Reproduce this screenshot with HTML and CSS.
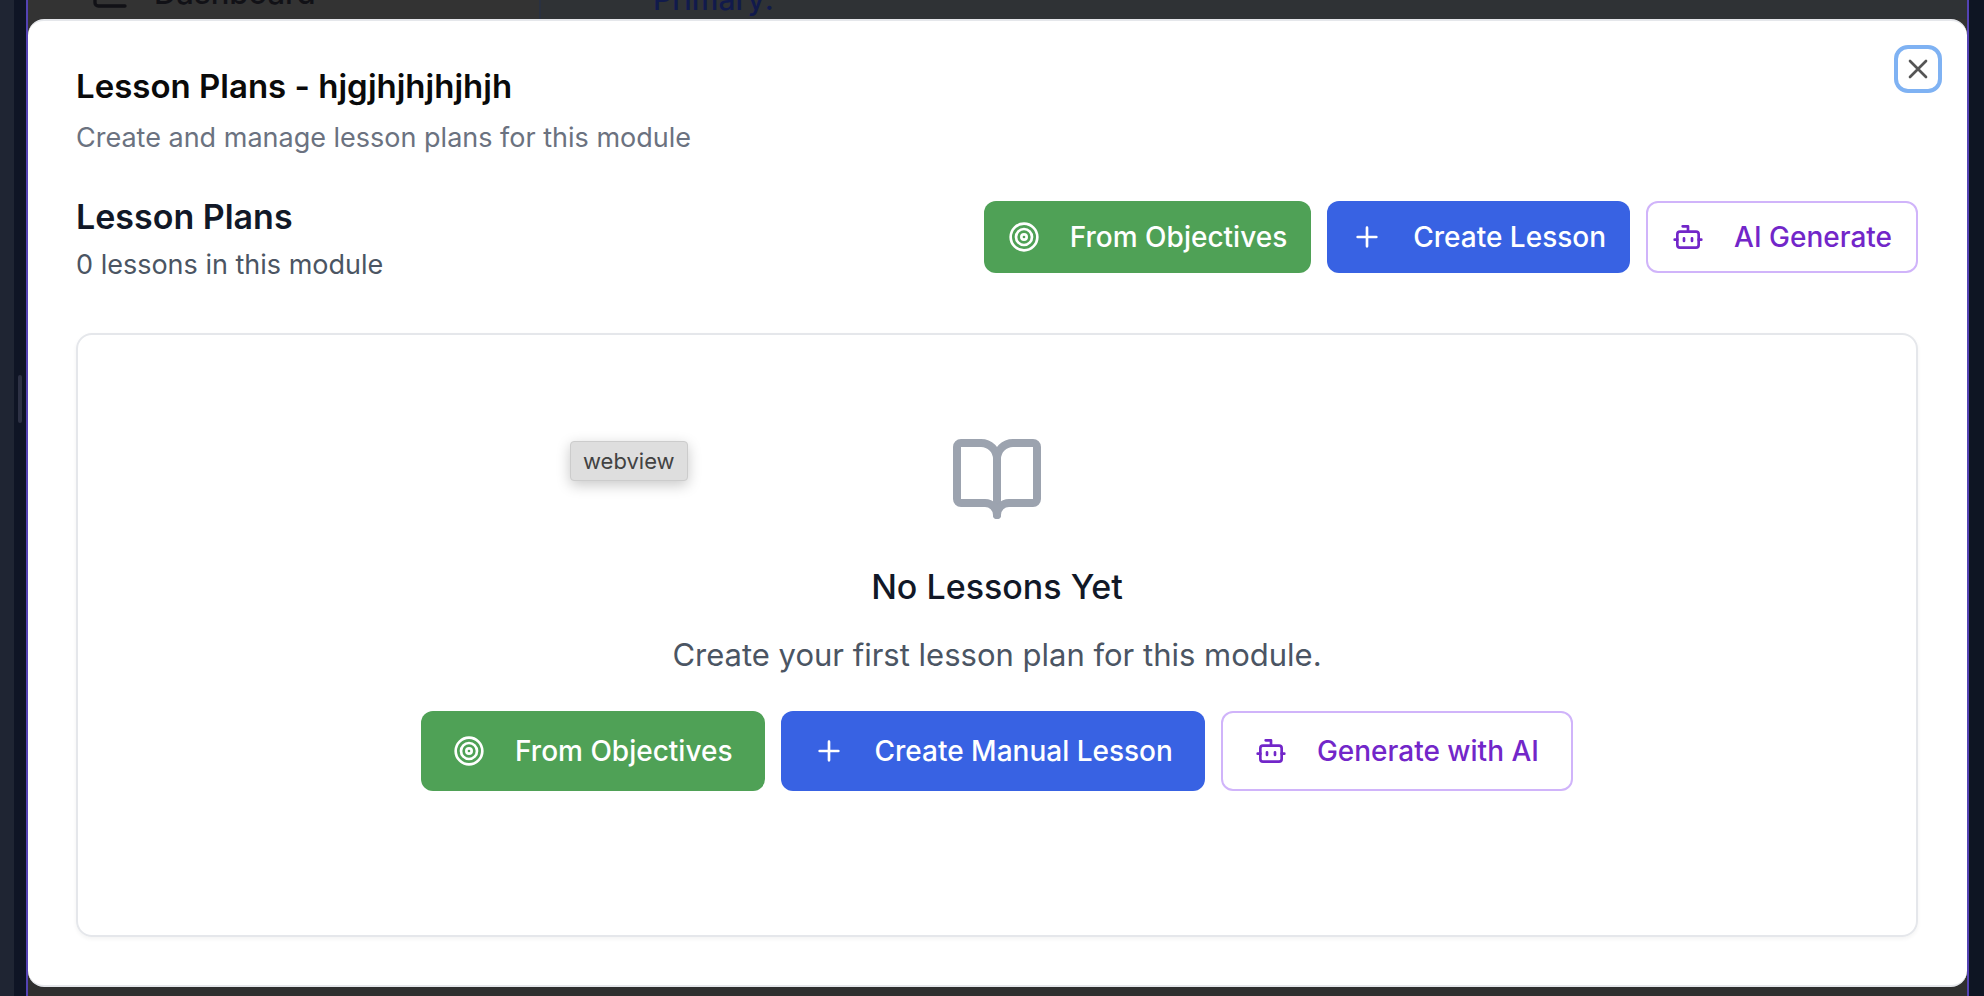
FILE: index.html
```html
<!DOCTYPE html>
<html lang="en">
<head>
<meta charset="utf-8">
<title>Lesson Plans</title>
<link rel="stylesheet" href="styles.css">
</head>
<body>
<svg class="sprite" aria-hidden="true">
  <symbol id="target" viewBox="0 0 24 24"><circle cx="12" cy="12" r="10"/><circle cx="12" cy="12" r="6"/><circle cx="12" cy="12" r="2"/></symbol>
  <symbol id="plus" viewBox="0 0 24 24"><path d="M5 12h14M12 5v14"/></symbol>
  <symbol id="bot" viewBox="0 0 24 24"><path d="M12 8V4H8"/><rect width="16" height="12" x="4" y="8" rx="2"/><path d="M2 14h2M20 14h2M15 13v2M9 13v2"/></symbol>
  <symbol id="book" viewBox="0 0 24 24"><path d="M12 7v14"/><path d="M3 18a1 1 0 0 1-1-1V4a1 1 0 0 1 1-1h5a4 4 0 0 1 4 4 4 4 0 0 1 4-4h5a1 1 0 0 1 1 1v13a1 1 0 0 1-1 1h-6a3 3 0 0 0-3 3 3 3 0 0 0-3-3z"/></symbol>
  <symbol id="close" viewBox="0 0 24 24"><path d="M18 6 6 18M6 6l12 12"/></symbol>
  <symbol id="chart" viewBox="0 0 24 24"><path d="M3 3v16a2 2 0 0 0 2 2h16"/></symbol>
</svg>
<div class="shell">
  <div class="rail"></div>
  <div class="gutter"><span class="grip"></span></div>
  <div class="frame">
    <div class="backdrop">
      <div class="nav-item"><svg class="icon"><use href="#chart"/></svg><span>Dashboard</span></div>
      <div class="notice">Primary:</div>
    </div>
    <main class="dialog" role="dialog" aria-labelledby="title">
      <button class="close" aria-label="Close"><svg class="icon"><use href="#close"/></svg></button>
      <header class="intro">
        <h1 class="title" id="title">Lesson Plans - hjgjhjhjhjhjh</h1>
        <p class="subtitle">Create and manage lesson plans for this module</p>
      </header>
      <section class="toolbar">
        <div>
          <h2 class="heading">Lesson Plans</h2>
          <p class="count">0 lessons in this module</p>
        </div>
        <div class="actions">
          <button class="btn green"><svg class="icon"><use href="#target"/></svg>From Objectives</button>
          <button class="btn blue"><svg class="icon"><use href="#plus"/></svg>Create Lesson</button>
          <button class="btn outline"><svg class="icon"><use href="#bot"/></svg>AI Generate</button>
        </div>
      </section>
      <section class="card">
        <svg class="icon book"><use href="#book"/></svg>
        <h3 class="empty-title">No Lessons Yet</h3>
        <p class="empty-text">Create your first lesson plan for this module.</p>
        <div class="actions large">
          <button class="btn green"><svg class="icon"><use href="#target"/></svg>From Objectives</button>
          <button class="btn blue"><svg class="icon"><use href="#plus"/></svg>Create Manual Lesson</button>
          <button class="btn outline"><svg class="icon"><use href="#bot"/></svg>Generate with AI</button>
        </div>
      </section>
    </main>
  </div>
  <div class="edge"></div>
</div>
<div class="tooltip" role="tooltip">webview</div>
</body>
</html>
```
FILE: styles.css
```css
* { box-sizing: border-box; }
body, h1, h2, h3, p { margin: 0; }
body {
  font-family: Inter, "Liberation Sans", sans-serif;
  background: #0f1525;
}
button { font: inherit; cursor: pointer; }
.sprite { display: none; }
.icon {
  width: 32px;
  height: 32px;
  flex: none;
  fill: none;
  stroke: currentColor;
  stroke-width: 2;
  stroke-linecap: round;
  stroke-linejoin: round;
}
.shell { display: flex; min-height: 100vh; }
.rail { width: 14px; background: #1f2533; }
.gutter { width: 12px; display: flex; justify-content: flex-end; align-items: flex-start; padding: 375px 4px 0 0; }
.grip { width: 4px; height: 48px; border-radius: 2px; background: #2d3144; }
.edge { width: 15px; background: #0e1523; }
.frame {
  flex: 1;
  min-width: 0;
  display: flex;
  flex-direction: column;
  padding-bottom: 9px;
  border: solid #5443b4;
  border-width: 0 2px;
  background: #2f2f2f;
}
.backdrop {
  display: flex;
  height: 32px;
  margin-bottom: -13px;
  overflow: hidden;
  background: #333333;
  color: #111116;
  font-size: 31px;
  font-weight: 500;
}
.nav-item { display: flex; align-items: flex-end; gap: 24px; width: 511px; height: 11px; padding-left: 62px; }
.nav-item .icon { width: 40px; height: 40px; }
.nav-item span { line-height: 36px; }
.notice {
  flex: 1;
  display: flex;
  align-items: flex-end;
  height: 19px;
  padding-left: 112px;
  border-left: 2px solid #2a3140;
  background: #2f3235;
  color: #111a4c;
  font-size: 30px;
  line-height: 40px;
}
.dialog {
  position: relative;
  flex: 1;
  display: flex;
  flex-direction: column;
  padding: 45px 49px 48px 48px;
  border: 2px solid #e5e7eb;
  border-width: 2px 0;
  border-radius: 16px;
  background: #ffffff;
}
.close {
  position: absolute;
  top: 24px;
  right: 25px;
  display: grid;
  place-items: center;
  width: 48px;
  height: 48px;
  padding: 0;
  border: 4px solid #7fb2f3;
  border-radius: 14px;
  background: #ffffff;
  color: #555555;
}
.title { color: #0a0a0a; font-size: 33px; font-weight: 600; line-height: 40px; }
.subtitle { margin-top: 12px; color: #6b7280; font-size: 27px; line-height: 40px; }
.toolbar { display: flex; justify-content: space-between; align-items: center; margin-top: 31px; }
.heading { color: #111827; font-size: 34px; font-weight: 600; line-height: 56px; }
.count { color: #4b5563; font-size: 27px; line-height: 40px; }
.actions { display: flex; gap: 16px; }
.btn {
  display: flex;
  align-items: center;
  gap: 30px;
  height: 72px;
  padding: 0 24px;
  border: 0;
  border-radius: 12px;
  color: #ffffff;
  font-size: 28px;
  font-weight: 500;
  white-space: nowrap;
}
.green { background: #4fa156; }
.blue { background: #3862e3; }
.outline { border: 2px solid #d0b4fa; background: #ffffff; color: #7226c9; }
.large .btn { height: 80px; padding: 0 32px; }
.card {
  flex: 1;
  display: flex;
  flex-direction: column;
  align-items: center;
  margin-top: 48px;
  padding: 96px 32px;
  border: 2px solid #e5e7eb;
  border-radius: 16px;
  box-shadow: 0 2px 4px rgba(0, 0, 0, 0.05);
}
.book { width: 96px; height: 96px; color: #9ca3af; }
.empty-title { margin-top: 32px; color: #111827; font-size: 34px; font-weight: 500; line-height: 56px; }
.empty-text { margin: 16px 0 32px; color: #4b5563; font-size: 31px; line-height: 48px; }
.tooltip {
  position: absolute;
  top: 441px;
  left: 570px;
  padding: 0 12px;
  border: 1px solid #cccccc;
  border-radius: 4px;
  background: #dedede;
  box-shadow: 0 4px 14px rgba(0, 0, 0, 0.22);
  color: #424242;
  font-size: 22px;
  line-height: 38px;
}
```
